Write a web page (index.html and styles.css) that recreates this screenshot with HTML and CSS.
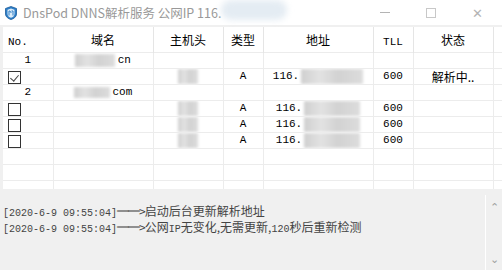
FILE: index.html
```html
<!DOCTYPE html>
<html lang="zh-CN">
<head>
  <meta charset="UTF-8" />
  <title>DnsPod DNNS解析服务</title>
  <link rel="stylesheet" href="styles.css">
</head>
<body>

  <div class="window">
    <div class="titlebar">
      <svg class="app-icon" width="12" height="14" viewBox="0 0 12 14">
        <path d="M6 0.5 L11.5 2.5 L11.5 8 C11.5 11 8.5 12.8 6 13.5 C3.5 12.8 0.5 11 0.5 8 L0.5 2.5 Z" fill="#2f7fc8" stroke="#1b5a99" stroke-width="0.8"/>
        <path d="M6 2.5 L9.5 3.8 L9.5 8 C9.5 10 7.8 11.2 6 11.7 C4.2 11.2 2.5 10 2.5 8 L2.5 3.8 Z" fill="#dcecf8"/>
        <path d="M4 5 L4 9.5 M4 5 C5.5 5 6 6 6 7 M8 5 L8 9.5 M8 5 L6.5 5" stroke="#2f7fc8" stroke-width="1" fill="none"/>
      </svg>
      <span class="title">DnsPod DNNS解析服务 公网IP 116.</span>
      <span class="title-mask"></span>
      <div class="controls">
        <span class="ctl min"></span>
        <span class="ctl max"></span>
        <span class="ctl close">✕</span>
      </div>
    </div>

    <div class="list">
      <table class="grid">
        <colgroup>
          <col class="c-no"><col class="c-dom"><col class="c-host"><col class="c-type">
          <col class="c-ip"><col class="c-ttl"><col class="c-st"><col>
        </colgroup>
        <thead>
          <tr>
            <th class="no"><span class="m">No.</span></th>
            <th>域名</th>
            <th>主机头</th>
            <th>类型</th>
            <th>地址</th>
            <th><span class="m">TLL</span></th>
            <th>状态</th>
            <th></th>
          </tr>
        </thead>
        <tbody>
          <tr>
            <td class="m">1</td>
            <td><span class="mask dom1"></span> <span class="m">cn</span></td>
            <td></td><td></td><td></td><td></td><td></td><td></td>
          </tr>
          <tr>
            <td class="chk-cell"><span class="chk on"></span></td>
            <td></td>
            <td><span class="mask host"></span></td>
            <td class="m">A</td>
            <td><span class="m">116.</span><span class="mask ip wide"></span></td>
            <td class="m">600</td>
            <td class="status">解析中..</td>
            <td></td>
          </tr>
          <tr>
            <td class="m">2</td>
            <td><span class="mask dom2"></span> <span class="m">com</span></td>
            <td></td><td></td><td></td><td></td><td></td><td></td>
          </tr>
          <tr>
            <td class="chk-cell"><span class="chk"></span></td>
            <td></td>
            <td><span class="mask host"></span></td>
            <td class="m">A</td>
            <td><span class="m">116.</span><span class="mask ip"></span></td>
            <td class="m">600</td>
            <td></td><td></td>
          </tr>
          <tr>
            <td class="chk-cell"><span class="chk"></span></td>
            <td></td>
            <td><span class="mask host"></span></td>
            <td class="m">A</td>
            <td><span class="m">116.</span><span class="mask ip"></span></td>
            <td class="m">600</td>
            <td></td><td></td>
          </tr>
          <tr>
            <td class="chk-cell"><span class="chk"></span></td>
            <td></td>
            <td><span class="mask host"></span></td>
            <td class="m">A</td>
            <td><span class="m">116.</span><span class="mask ip"></span></td>
            <td class="m">600</td>
            <td></td><td></td>
          </tr>
          <tr><td></td><td></td><td></td><td></td><td></td><td></td><td></td><td></td></tr>
          <tr><td></td><td></td><td></td><td></td><td></td><td></td><td></td><td></td></tr>
          <tr><td></td><td></td><td></td><td></td><td></td><td></td><td></td><td></td></tr>
        </tbody>
      </table>
    </div>

    <div class="log">
      <div class="log-text">
        <div class="line"><span class="m">[2020-6-9 09:55:04]</span><span class="arrow">══&gt;</span>启动后台更新解析地址</div>
        <div class="line"><span class="m">[2020-6-9 09:55:04]</span><span class="arrow">══&gt;</span>公网<span class="m">IP</span>无变化,无需更新,<span class="m">120</span>秒后重新检测</div>
      </div>
      <div class="scroll">
        <span class="arr">&#8963;</span>
        <span class="arr down">&#8964;</span>
      </div>
    </div>
  </div>

</body>
</html>
```

FILE: styles.css
```css
body {
  margin: 0;
  background: #f0f0f0;
  font-family: "Noto Sans CJK SC", sans-serif;
  font-size: 12px;
  color: #000;
  overflow: hidden;
}
.window {
  width: 502px;
  height: 270px;
  display: flex;
  flex-direction: column;
  overflow: hidden;
}
.m {
  font-family: "Liberation Mono", monospace;
  font-size: 11px;
}

/* title bar */
.titlebar {
  height: 25px;
  background: #fff;
  display: flex;
  align-items: center;
  padding-left: 5px;
  flex-shrink: 0;
}
.app-icon {
  margin-right: 6px;
}
.title {
  color: #999;
  font-size: 12.5px;
  white-space: nowrap;
}
.title-mask {
  width: 66px;
  height: 20px;
  margin-top: -6px;
  background: #e4ecf3;
  border-radius: 10px;
  filter: blur(3px);
}
.controls {
  margin-left: auto;
  display: flex;
  height: 25px;
  align-items: center;
}
.ctl {
  width: 46px;
  display: flex;
  justify-content: center;
  align-items: center;
  color: #b4b4b4;
}
.ctl.min::before {
  content: "";
  width: 10px;
  height: 1px;
  background: #b4b4b4;
}
.ctl.max::before {
  content: "";
  width: 10px;
  height: 10px;
  box-sizing: border-box;
  border: 1px solid #c8c8c8;
}
.ctl.close {
  font-size: 13px;
  font-weight: 300;
  margin-right: 2px;
}

/* list view */
.list {
  margin: 2px 0 0 3px;
  height: 162px;
  background: #fff;
  overflow: hidden;
  flex-shrink: 0;
}
.grid {
  border-collapse: collapse;
  table-layout: fixed;
  width: 520px;
}
.c-no { width: 50px; }
.c-dom { width: 100px; }
.c-host { width: 70px; }
.c-type { width: 40px; }
.c-ip { width: 110px; }
.c-ttl { width: 40px; }
.c-st { width: 80px; }
.grid th {
  height: 25px;
  padding: 0;
  font-weight: normal;
  border-right: 1px solid #e5e5e5;
  text-align: center;
  white-space: nowrap;
}
.grid th.no {
  text-align: left;
  padding-left: 5px;
}
.grid td {
  height: 15px;
  padding: 0;
  border-right: 1px solid #ececec;
  border-top: 1px solid #ececec;
  text-align: center;
  white-space: nowrap;
  line-height: 15px;
  overflow: hidden;
}
.grid td span {
  vertical-align: top;
  line-height: 15px;
}
.grid td.chk-cell {
  text-align: left;
  padding-left: 5px;
}
.chk {
  display: block;
  width: 13px;
  height: 13px;
  margin-top: 1px;
  box-sizing: border-box;
  border: 1px solid #333;
  background: #fff;
  position: relative;
}
.chk.on::after {
  content: "";
  position: absolute;
  left: 3px;
  top: 1px;
  width: 4px;
  height: 7px;
  border: solid #444;
  border-width: 0 1.5px 1.5px 0;
  transform: rotate(40deg);
}
.status {
  font-size: 12px;
}

/* masked values */
.mask {
  display: inline-block;
  background: linear-gradient(90deg, #cfcfcf, #e2e2e2 30%, #d2d2d2 60%, #dcdcdc);
  filter: blur(1.5px);
}
.grid td .mask.dom1 { width: 40px; height: 13px; margin-top: 1px; }
.grid td .mask.dom2 { width: 36px; height: 11px; margin-top: 2px; }
.grid td .mask.host { width: 20px; height: 15px; }
.grid td .mask.ip { width: 56px; height: 15px; margin-left: 2px; }
.grid td .mask.ip.wide { width: 62px; }

/* log */
.log {
  flex: 1;
  display: flex;
  margin-top: 6px;
}
.log-text {
  flex: 1;
  padding: 9px 0 0 3px;
  color: #444;
  font-size: 12px;
  line-height: 13px;
  white-space: nowrap;
  overflow: hidden;
}
.log-text .m {
  font-size: 10px;
}
.arrow {
  letter-spacing: -1px;
}
.scroll {
  width: 16px;
  border-left: 1px solid #fff;
  display: flex;
  flex-direction: column;
  justify-content: space-between;
  align-items: center;
  padding: 3px 0 4px;
  color: #a0a0a0;
  font-size: 11px;
}
```
